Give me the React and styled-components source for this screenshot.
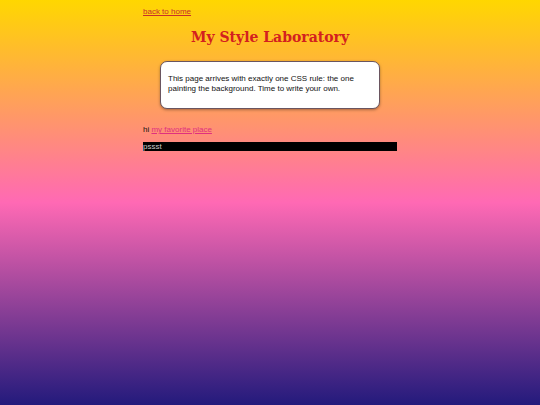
import React from 'react';
import styled, { createGlobalStyle } from 'styled-components';

const GlobalStyle = createGlobalStyle`
	html {
		min-height: 100%;
		background: linear-gradient(#ffd700, #ff69b4, #231a7c);
	}
	body {
		margin: 0;
		min-height: 405px;
		font-family: 'Liberation Sans', Arial, sans-serif;
		font-size: 8px;
		color: #111;
	}
`;

const Page = styled.main`
	width: 254px;
	margin: 0 auto;
	padding-top: 7px;
`;

const HomeLink = styled.a`
	display: block;
	color: #c8302a;
	text-decoration: underline;
	line-height: 10px;
`;

const Title = styled.h1`
	margin: 11px 0 0;
	font-family: 'DejaVu Serif', Georgia, serif;
	font-size: 14px;
	font-weight: bold;
	color: #d3201f;
	text-align: center;
	line-height: 18px;
`;

const Notice = styled.section`
	margin: 15px 17px 0;
	padding: 12px 7px 14px;
	background: #fff;
	border: 1px solid #6a5560;
	border-radius: 7px;
	box-shadow: 0 1px 3px rgba(0, 0, 0, 0.35);
	line-height: 10px;
`;

const Greeting = styled.p`
	margin: 16px 0 0;
	line-height: 10px;
`;

const FavLink = styled.a`
	color: #e0307f;
	text-decoration: underline;
`;

const Secret = styled.div`
	margin-top: 7px;
	height: 9px;
	line-height: 9px;
	background: #000;
	color: #ccc;
`;

export default function App() {
	return (
		<>
			<GlobalStyle />
			<Page>
				<HomeLink href="#">back to home</HomeLink>
				<Title>My Style Laboratory</Title>
				<Notice>
					This page arrives with exactly one CSS rule: the one painting the background. Time to write your own.
				</Notice>
				<Greeting>
					hi <FavLink href="#">my favorite place</FavLink>
				</Greeting>
				<Secret>pssst</Secret>
			</Page>
		</>
	);
}
